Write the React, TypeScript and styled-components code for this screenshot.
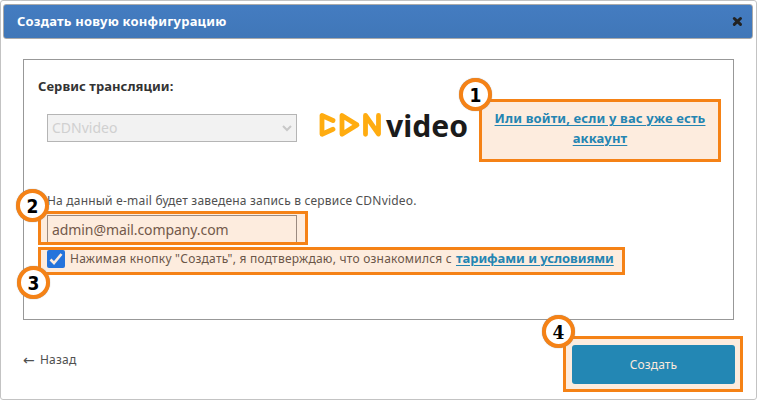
import React from "react";
import styled, { createGlobalStyle } from "styled-components";

const sans = '"Noto Sans", "Open Sans", sans-serif';
const orange = "#f58216";
const cream = "#fdecde";

const Global = createGlobalStyle`
  * { box-sizing: border-box; }
  body { margin: 0; background: #fff; font-family: ${sans}; color: #505050; }
`;

const Dialog = styled.main`
  width: 757px;
  height: 400px;
  border: 1px solid #c3c3c3;
  border-radius: 3px;
  padding: 3px 3px 0 2px;
  overflow: hidden;
`;

const Header = styled.header`
  height: 35px;
  width: 750px;
  display: flex;
  align-items: center;
  justify-content: space-between;
  padding: 0 9px 1px 13px;
  border: 1px solid #aaa;
  border-radius: 3px;
  background: linear-gradient(#447cc1, #4077b8);
`;

const Line = styled.span<{ $size: number; $spacing?: number; $bold?: boolean; $color?: string }>`
  white-space: nowrap;
  font-size: ${(p) => p.$size}px;
  line-height: 20px;
  font-weight: ${(p) => (p.$bold ? 700 : 400)};
  letter-spacing: ${(p) => p.$spacing ?? 0}px;
  color: ${(p) => p.$color ?? "#505050"};
`;

const CloseButton = styled.button`
  width: 11px;
  height: 11px;
  padding: 0;
  border: 0;
  background: none;
  display: flex;
`;

const Panel = styled.section`
  width: 711px;
  height: 261px;
  margin: 20px 0 0 20px;
  border: 1px solid #989898;
  padding: 16px 0 0 14px;
`;

const ServiceRow = styled.div`
  display: flex;
  height: 83px;
  align-items: flex-start;
`;

const ServiceField = styled.div`
  width: 280px;
  display: flex;
  flex-direction: column;
`;

const Select = styled.div`
  width: 250px;
  height: 28px;
  margin: 18px 0 0 9px;
  display: flex;
  align-items: center;
  justify-content: space-between;
  padding: 0 4px 0 4px;
  border: 1px solid #b5b5b5;
  background: #f2f2f2;
`;

const Logo = styled.svg`
  width: 152px;
  height: 48px;
  flex: none;
  margin-top: 26px;
  overflow: visible;
`;

const Highlight = styled.div`
  position: relative;
  border: 3px solid ${orange};
  background: ${cream};
  display: flex;
`;

const LoginHighlight = styled(Highlight)`
  width: 242px;
  height: 63px;
  margin: 23px 0 0 9px;
  padding-top: 6px;
  justify-content: center;
  text-align: center;
`;

const EmailHighlight = styled(Highlight)`
  width: 270px;
  height: 34px;
  padding: 1px 8px 0 6px;
`;

const ConsentHighlight = styled(Highlight)`
  width: 587px;
  height: 28px;
  margin-top: 2px;
  padding-left: 6px;
  gap: 5px;
  align-items: flex-start;
`;

const SubmitHighlight = styled(Highlight)`
  width: 180px;
  height: 56px;
  padding: 6px 5px 5px 6px;
`;

const Badge = styled.span<{ $x: number; $y: number; $serif?: boolean }>`
  position: absolute;
  z-index: 1;
  left: ${(p) => p.$x}px;
  top: ${(p) => p.$y}px;
  width: 33px;
  height: 33px;
  display: flex;
  align-items: center;
  justify-content: center;
  border: 4px solid ${orange};
  border-radius: 50%;
  background: #fff;
  box-shadow: 0 0 1px #888;
  color: #000;
  font: 700 19px/24px ${(p) => (p.$serif ? '"DejaVu Serif", serif' : '"DejaVu Sans", sans-serif')};
  font-stretch: condensed;
`;

const EmailGroup = styled.div`
  margin-top: 30px;
  display: flex;
  flex-direction: column;
`;

const Caption = styled.div`
  height: 22px;
  padding: 2px 0 0 9px;
  display: flex;
`;

const Input = styled.div`
  width: 250px;
  height: 27px;
  border: 1px solid #9b8a80;
  border-bottom: 0;
  padding: 4px 0 0 4px;
  display: flex;
`;

const Link = styled.a<{ $spacing: number }>`
  color: #2485b2;
  font-weight: 700;
  font-size: 13px;
  line-height: 20px;
  letter-spacing: ${(p) => p.$spacing}px;
  text-decoration: underline;
  text-decoration-thickness: 1px;
  text-underline-offset: 2px;
`;

const Checkbox = styled.span`
  width: 18px;
  height: 18px;
  flex: none;
  display: flex;
  border-radius: 2px;
  background: #2574dc;
`;

const ConsentText = styled.div`
  display: flex;
  align-items: baseline;
  gap: 4px;
  margin-top: -2px;
  white-space: nowrap;
`;

const Footer = styled.footer`
  display: flex;
  justify-content: space-between;
  padding: 16px 10px 0 20px;
`;

const Back = styled.div`
  display: flex;
  gap: 4px;
  margin-top: 14px;
`;

const Arrow = styled.span`
  width: 13px;
  font: 14px/20px "DejaVu Sans", sans-serif;
`;

const Submit = styled.button`
  flex: 1;
  padding: 0;
  border: 0;
  border-radius: 3px;
  background: #2387b4;
  font-family: ${sans};
`;

export default function App() {
  return (
    <>
      <Global />
      <Dialog>
        <Header>
          <Line $size={13} $spacing={0.2} $bold $color="#fff">Создать новую конфигурацию</Line>
          <CloseButton aria-label="Закрыть">
            <svg width="11" height="11" viewBox="0 0 11 11">
              <path d="M2.3 2.5 8.5 8.4M8.5 2.5 2.3 8.4" stroke="#222" strokeWidth="3" strokeLinecap="round" />
            </svg>
          </CloseButton>
        </Header>
        <Panel>
          <ServiceRow>
            <ServiceField>
              <Line $size={13} $spacing={0.05} $bold $color="#333">Сервис трансляции:</Line>
              <Select>
                <Line $size={14} $color="#d0d0d0">CDNvideo</Line>
                <svg width="10" height="8" viewBox="0 0 10 8">
                  <path d="M1 2l4 4 4-4" fill="none" stroke="#c8c8c8" strokeWidth="2" />
                </svg>
              </Select>
            </ServiceField>
            <Logo viewBox="-2 -8 152 48" role="img" aria-label="CDNvideo">
              <g fill="none" stroke="#ffac10" strokeWidth="4.8" strokeLinejoin="round" strokeLinecap="round">
                <path d="M13 10.500 2 5.500V24.300L13 19.300" />
                <path d="M22 5.500V24.300L37 14.900Z" />
                <path d="M45.500 24.300V5.500L58.500 24V5.500" />
              </g>
              <text x="66" y="26.500" fontFamily="Noto Sans, sans-serif" fontSize="31" fontWeight="700" textLength="82" lengthAdjust="spacingAndGlyphs" fill="#1b1b1b">video</text>
            </Logo>
            <LoginHighlight>
              <Badge $x={-23} $y={-24}>1</Badge>
              <Link href="#" $spacing={0.14}>Или войти, если у вас уже есть<br />аккаунт</Link>
            </LoginHighlight>
          </ServiceRow>
          <EmailGroup>
            <Caption><Line $size={12} $spacing={0.2}>На данный e-mail будет заведена запись в сервисе CDNvideo.</Line></Caption>
            <EmailHighlight>
              <Badge $x={-25} $y={-25}>2</Badge>
              <Input><Line $size={14} $spacing={-0.08} $color="#73594a">admin@mail.company.com</Line></Input>
            </EmailHighlight>
            <ConsentHighlight>
              <Badge $x={-24} $y={16}>3</Badge>
              <Checkbox>
                <svg width="18" height="18" viewBox="0 0 18 18">
                  <path d="M3.500 9.500 7 13 14.500 4" fill="none" stroke="#fdecde" strokeWidth="2.600" />
                </svg>
              </Checkbox>
              <ConsentText>
                <Line $size={12} $spacing={0.235} $color="#6b5648">Нажимая кнопку "Создать", я подтверждаю, что ознакомился с</Line>
                <Link href="#" $spacing={-0.05}>тарифами и условиями</Link>
              </ConsentText>
            </ConsentHighlight>
          </EmailGroup>
        </Panel>
        <Footer>
          <Back><Arrow>←</Arrow><Line $size={12} $spacing={0.2}>Назад</Line></Back>
          <SubmitHighlight>
            <Badge $x={-24} $y={-24} $serif>4</Badge>
            <Submit><Line $size={12} $spacing={0.1} $color="#fbe9dc">Создать</Line></Submit>
          </SubmitHighlight>
        </Footer>
      </Dialog>
    </>
  );
}
